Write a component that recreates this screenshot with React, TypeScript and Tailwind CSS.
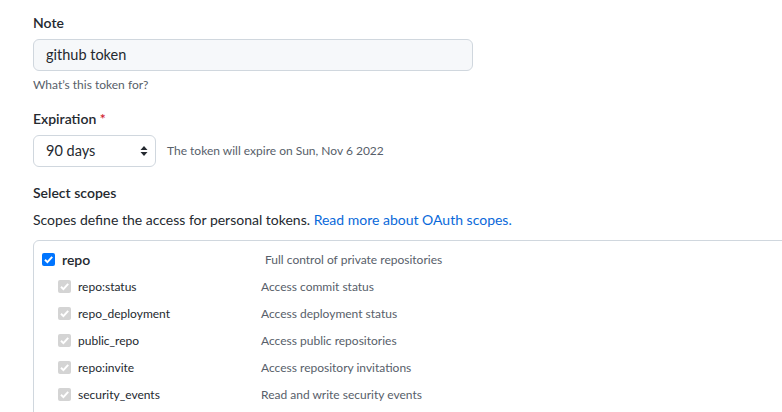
import React from "react";

const font = { fontFamily: 'Lato, "Liberation Sans", sans-serif' };

function Check({ disabled }: { disabled?: boolean }) {
  return (
    <span
      className={
        "flex h-[13px] w-[13px] shrink-0 items-center justify-center rounded-[2px] " +
        (disabled ? "bg-[#d4d4d4]" : "bg-[#0075ff]")
      }
    >
      <svg viewBox="0 0 13 13" className="h-[13px] w-[13px]">
        <path d="M3 6.8 L5.4 9.1 L10.2 3.9" fill="none" stroke="white" strokeWidth="2" />
      </svg>
    </span>
  );
}

const scopes = [
  ["repo:status", "Access commit status"],
  ["repo_deployment", "Access deployment status"],
  ["public_repo", "Access public repositories"],
  ["repo:invite", "Access repository invitations"],
  ["security_events", "Read and write security events"],
];

export default function App() {
  return (
    <div className="h-[412px] w-[782px] overflow-hidden bg-white text-[#24292f]" style={font}>
      <div className="pl-[33px] pt-[13px]">
        <div className="text-sm font-semibold leading-[20px]">Note</div>
        <div className="mt-[6px] flex h-[32px] w-[440px] items-center rounded-md border border-[#d0d7de] bg-[#f6f8fa] px-[12px] text-[14.5px]">
          github token
        </div>
        <div className="mt-[5px] text-xs leading-[18px] text-[#57606a]">What’s this token for?</div>

        <div className="mt-[15px] text-sm font-semibold leading-[20px]">
          Expiration <span className="text-[#cf222e]">*</span>
        </div>
        <div className="mt-[6px] flex items-center gap-[11px]">
          <div className="flex h-[32px] w-[123px] items-center justify-between rounded-md border border-[#d0d7de] bg-white pl-[12px] pr-[7px] text-[14.5px]">
            <span>90 days</span>
            <svg viewBox="0 0 8 12" className="h-[12px] w-[8px]">
              <path d="M4 1 L7.5 5 L0.5 5 Z M4 11 L7.5 7 L0.5 7 Z" fill="#24292f" />
            </svg>
          </div>
          <span className="text-xs text-[#57606a]">The token will expire on Sun, Nov 6 2022</span>
        </div>

        <div className="mt-[16px] text-sm font-semibold leading-[20px]">Select scopes</div>
        <div className="mt-[7px] text-sm leading-[20px]">
          Scopes define the access for personal tokens.{" "}
          <span className="text-[#0969da]">Read more about OAuth scopes.</span>
        </div>

        <div className="mt-[10px] h-[200px] w-[800px] rounded-md border border-[#d0d7de] pt-[5px] pl-[8px]">
          <div className="flex h-[27px] items-center">
            <Check />
            <span className="ml-[7px] w-[203px] text-sm font-semibold">repo</span>
            <span className="text-xs text-[#57606a]">Full control of private repositories</span>
          </div>
          {scopes.map(([name, desc]) => (
            <div key={name} className="flex h-[27px] items-center pl-[16px]">
              <Check disabled />
              <span className="ml-[7px] w-[183px] text-xs">{name}</span>
              <span className="text-xs text-[#57606a]">{desc}</span>
            </div>
          ))}
        </div>
      </div>
    </div>
  );
}
